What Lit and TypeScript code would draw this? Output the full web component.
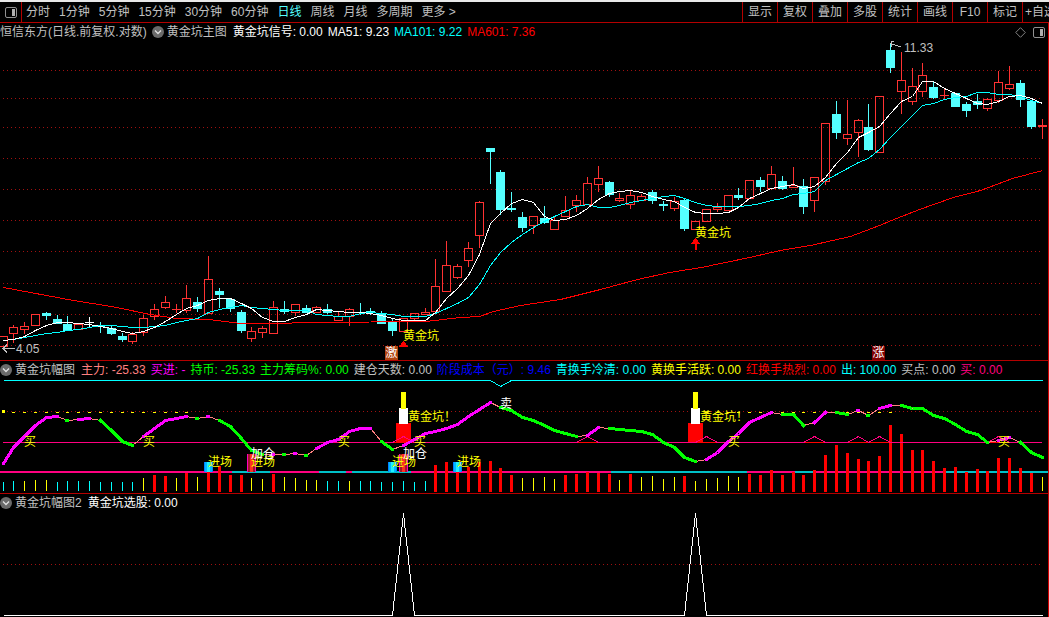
import { LitElement, html, svg, css } from "lit";
import { customElement, state } from "lit/decorators.js";

type Candle = [kind: string, high: number, top: number, bottom: number, low: number];

const RED = "#ff3232";
const CYAN = "#54ffff";
const PINK = "#ff0080";

/* kind (r: rising, c: falling, w: unchanged), high, body top, body bottom, low */
const candles: Candle[] = [
  ["r",336,336,347,347],["r",325,327,334,343],["r",322,326,330,334],["r",314,314,326,326],["c",312,313,316,320],
  ["c",315,319,324,324],["c",316,324,331,331],["r",323,324,330,330],["w",317,322,323,327],["c",322,326,327,333],
  ["c",325,328,334,335],["c",333,336,340,342],["r",332,334,342,344],["r",315,318,333,336],["r",304,309,317,320],
  ["r",296,302,308,309],["r",304,309,310,313],["r",285,298,311,313],["c",297,302,309,312],["r",256,279,314,314],
  ["c",288,291,295,308],["c",298,299,309,312],["c",310,312,331,333],["r",327,331,339,342],["r",326,328,333,338],
  ["r",301,307,334,334],["c",301,309,312,314],["r",304,304,313,316],["c",305,308,313,313],["r",306,307,313,313],
  ["c",304,309,313,314],["r",312,316,321,321],["r",308,309,317,326],["c",303,312,313,315],["c",308,311,313,315],
  ["c",311,313,324,324],["c",318,322,331,336],["r",318,318,332,332],["r",313,313,319,320],["r",308,312,315,315],
  ["r",259,286,312,312],["r",241,265,292,292],["r",264,266,278,279],["r",242,248,261,267],["r",201,202,236,248],
  ["c",148,148,152,184],["c",170,172,210,215],["c",192,208,210,212],["c",212,217,228,232],["r",216,216,226,234],
  ["c",206,218,223,224],["r",217,220,230,230],["r",196,210,217,217],["r",195,200,206,212],["r",177,183,205,205],
  ["r",166,178,185,192],["c",181,182,195,197],["r",193,198,201,202],["r",190,195,205,209],["r",194,196,201,201],
  ["c",190,192,201,204],["c",201,204,206,211],["r",197,201,209,211],["c",198,200,229,231],["r",221,221,230,230],
  ["r",209,209,222,222],["r",203,207,210,212],["r",195,195,211,211],["c",188,195,198,200],["r",180,180,199,199],
  ["c",177,180,187,192],["r",166,174,189,190],["c",176,181,189,190],["r",167,185,188,188],["c",179,186,207,214],
  ["r",177,177,201,212],["r",123,123,182,185],["c",101,114,133,139],["r",100,134,139,145],["r",119,120,133,157],
  ["c",104,127,150,151],["r",96,96,153,153],["c",43,50,68,73],["r",52,80,92,114],["r",68,86,102,105],
  ["r",63,75,92,97],["c",82,87,98,99],["r",88,95,96,100],["c",93,93,107,107],["c",102,104,111,117],
  ["c",94,101,105,109],["r",98,99,109,111],["r",71,82,101,103],["r",66,84,89,90],["c",80,83,100,107],
  ["c",101,101,127,129],["r",119,125,127,139],
];

const maShort = [
  340,339,336,330,325,322,322,323,324,326,328,331,333,331,327,321,314,308,305,300,298,298,303,308,317,321,321,317,314,309,
  310,311,312,312,313,315,318,320,320,320,312,298,288,275,254,223,213,203,199,202,216,220,219,215,208,199,193,191,190,192,
  196,199,201,207,212,213,213,212,207,198,193,188,186,184,188,186,177,163,152,137,132,126,113,101,96,81,81,88,93,98,103,
  104,101,96,95,98,103,
];

const maMid = [
  340,339,337,335,333,332,330,329,327,325,325,326,327,327,326,325,322,320,318,312,309,307,305,307,308,309,310,310,310,314,
  315,316,316,313,312,313,314,316,316,316,313,308,303,297,284,265,252,242,234,227,221,216,211,206,204,207,207,205,202,200,
  198,196,195,198,202,205,206,206,206,205,203,200,198,194,193,191,180,174,168,162,158,149,137,126,115,105,103,99,97,96,92,
  92,94,94,96,100,103,
];

const maLong: [number, number][] = [
  [0,287],[6.5,300],[10,306],[13.6,314],[16,318],[19,319],[22,323],[24.5,323],[29,322],[39,321],[42.3,317],[44,316],
  [45.3,311],[47.8,305],[51.5,299],[55.2,289],[58.6,279],[61.6,272],[64.5,267],[69,257],[71.8,250],[74.6,245],[78.3,236],
  [81,225],[82.1,220],[84.7,209],[87.8,197],[90.3,190],[93.3,178],[96,170],
];

const trend = [
  463,447,436,425,417,416,420,419,418,420,430,441,445,436,428,420,418,416,418,416,420,426,438,450,454,454,454,453,455,448,
  442,439,431,428,428,441,449,445,439,433,431,428,424,416,409,402,407,410,417,420,425,430,433,436,435,427,428,429,430,431,
  434,442,447,457,461,459,452,441,433,422,417,412,414,414,425,422,412,412,414,410,415,408,405,405,408,408,415,418,424,431,
  434,442,440,437,442,452,457,
];

/* first index, last index, m: strengthening, g: weakening */
const trendRuns: [number, number, string][] = [
  [0,5,"m"],[6,6,"g"],[7,8,"m"],[9,12,"g"],[13,17,"m"],[18,18,"g"],[19,19,"m"],[20,24,"g"],[25,25,"m"],[26,26,"g"],
  [27,27,"m"],[28,28,"g"],[29,34,"m"],[35,36,"g"],[37,45,"m"],[46,53,"g"],[54,55,"m"],[56,64,"g"],[65,71,"m"],[72,74,"g"],
  [75,76,"m"],[77,78,"g"],[79,79,"m"],[80,80,"g"],[81,82,"m"],[83,91,"g"],[92,93,"m"],[94,96,"g"],
];

const turnoverKinds =
  "ccyyyccccccccyrryryrrrryyryyyyccyccccccc" + "rrrrrrrryyyyrrrrryryyyyryyyyy" + "rrrrrrrrrrrrrrrrrrrrrrrrrrry";
const turnoverTops = [
  482,481,481,480,480,482,481,481,481,482,482,482,482,478,475,476,478,473,477,472,466,475,475,478,479,474,477,478,480,480,
  481,481,481,481,481,482,482,481,482,481,465,462,472,467,462,461,468,475,478,478,477,479,475,474,472,473,474,480,474,477,
  476,479,477,476,481,479,478,476,477,474,475,470,475,472,475,470,455,445,453,459,461,456,425,434,450,450,461,468,467,472,
  469,471,458,458,468,473,477,
];

/* positions where the base band changes colour, beginning with pink */
const bandEdges = [-0.3,21.25,24.75,29.2,31.75,32.25,37.75,56.25,68.8,73.25,75,87.2,96.6];

const periods = ["分时","1分钟","5分钟","15分钟","30分钟","60分钟","日线","周线","月线","多周期","更多 〉"];
const tools = ["显示","复权","叠加","多股","统计","画线","F10","标记","+自选"];

const mainValues: [string, string][] = [
  ["黄金坑信号: 0.00","white"],["MA51: 9.23","white"],["MA101: 9.22","cyan"],["MA601: 7.36","red"],
];
const bandValues: [string, string][] = [
  ["主力: -25.33","salmon"],["买进: -","magenta"],["持币: -25.33","green"],["主力筹码%: 0.00","green"],
  ["建仓天数: 0.00","gray"],["阶段成本（元）: 9.46","blue"],["青换手冷清: 0.00","cyan"],["黄换手活跃: 0.00","yellow"],
  ["红换手热烈: 0.00","red"],["出: 100.00","cyan"],["买点: 0.00","gray"],["买: 0.00","pink"],
];

@customElement("app-root")
export class AppRoot extends LitElement {
  static styles = css`
    :host {
      display: block;
      min-height: 100vh;
      overflow: hidden;
      background: #000;
      color: #c0c0c0;
      font: 12px/16px "Liberation Sans", "Noto Sans CJK SC", sans-serif;
    }
    button {
      font: inherit;
      color: inherit;
      background: none;
      border: 0;
      padding: 0;
      margin: 0;
      white-space: nowrap;
      cursor: pointer;
    }
    .topbar {
      display: flex;
      height: 20px;
      border-top: 2px solid #e8e8e8;
      border-bottom: 1px solid #b40000;
      overflow: hidden;
    }
    .layout {
      flex: none;
      width: 22px;
      border-right: 1px solid #b40000;
      box-sizing: border-box;
      display: grid;
      place-items: center;
    }
    .periods {
      display: flex;
      flex: 1;
      min-width: 0;
      gap: 9px;
      padding-left: 4px;
      overflow: hidden;
    }
    .active { color: #54ffff; }
    .tools { display: flex; flex: none; }
    .tool {
      width: 35px;
      border-left: 1px solid #b40000;
      overflow: hidden;
      text-align: center;
    }
    .tool:last-child {
      width: 27px;
      padding-left: 2px;
      text-align: left;
    }
    .panel {
      border-right: 1px solid #d00000;
      border-bottom: 1px solid #b40000;
    }
    .panel:last-child { border-bottom: 0; }
    .legend {
      display: flex;
      align-items: center;
      gap: 5px;
      height: 17px;
      white-space: nowrap;
      overflow: hidden;
    }
    .main .legend { height: 18px; }
    .title { display: flex; align-items: center; gap: 3px; margin-right: 1px; }
    .spacer { flex: 1; }
    .corner { display: flex; gap: 7px; padding-right: 3px; }
    .legend button, .corner button { display: flex; }
    svg { display: block; }
    .plot { shape-rendering: crispEdges; overflow: hidden; }
    .plot text { fill: #c0c0c0; }
    .plot .yellow { fill: #ff0; }
    .plot .white { fill: #fff; }
    .line { fill: none; stroke-width: 1; }
    .grid { stroke: #a01010; stroke-dasharray: 1 3; }
    .white { color: #fff; }
    .cyan { color: #00ffff; }
    .red { color: #ff0000; }
    .salmon { color: #ff8080; }
    .magenta { color: #ff00ff; }
    .green { color: #00ff00; }
    .gray { color: #c0c0c0; }
    .blue { color: #0000ff; }
    .yellow { color: #ffff00; }
    .pink { color: #ff0080; }
  `;

  @state() private span = 1049;
  @state() private period = "日线";

  private observer = new ResizeObserver(() => {
    this.span = this.clientWidth || this.span;
  });

  connectedCallback() {
    super.connectedCallback();
    this.observer.observe(this);
  }

  disconnectedCallback() {
    this.observer.disconnect();
    super.disconnectedCallback();
  }

  /** Left pixel of the one-pixel column that belongs to bar i. */
  private x(i: number) {
    return Math.floor(3 + (i * (this.span - 10)) / 96);
  }

  private points(list: [number, number][]) {
    return list.map(([i, y]) => `${this.x(i) + 0.5},${y + 0.5}`).join(" ");
  }

  private series(values: number[], from = 0, to = values.length - 1) {
    return this.points(values.slice(from, to + 1).map((y, k) => [from + k, y] as [number, number]));
  }

  private box(x: number, y: number, w: number, h: number, fill: string) {
    return svg`<rect x=${x} y=${y} width=${w} height=${h} fill=${fill}></rect>`;
  }

  private gridLine(y: number) {
    return svg`<line class="grid" x1="3" x2=${this.span - 6} y1=${y + 0.5} y2=${y + 0.5}></line>`;
  }

  private label(i: number, center: number, text: string, cls: string, shift = 0) {
    return svg`<text class=${cls} x=${this.x(i) + shift} y=${center + 4}>${text}</text>`;
  }

  private candle([kind, high, top, bottom, low]: Candle, i: number) {
    const x = this.x(i);
    if (kind === "r" && bottom - top > 2) {
      return svg`
        ${top > high ? this.box(x, high, 1, top - high, RED) : ""}
        ${low > bottom ? this.box(x, bottom, 1, low - bottom, RED) : ""}
        <rect x=${x - 3.5} y=${top + 0.5} width="8" height=${bottom - top - 1} fill="none" stroke=${RED}></rect>`;
    }
    const fill = kind === "r" ? RED : kind === "w" ? "#fff" : CYAN;
    return svg`${this.box(x, high, 1, low - high, fill)}${this.box(x - 4, top, 9, bottom - top, fill)}`;
  }

  private badge(x: number, text: string, fill: string) {
    return svg`${this.box(x, 346, 13, 14, fill)}<text class="white" x=${x + 0.5} y="357">${text}</text>`;
  }

  private mainPlot() {
    const first = this.x(37) + 0.5;
    const second = this.x(64) + 0.5;
    const peak = this.x(82);
    return html`<svg class="plot" width=${this.span - 1} height="319" viewBox="0 41 ${this.span - 1} 319">
      ${[70, 98, 127, 158, 189, 220, 251, 283, 314, 345].map((y) => this.gridLine(y))}
      ${candles.map((c, i) => this.candle(c, i))}
      <polyline class="line" stroke="#ff0000" points=${this.points(maLong)}></polyline>
      <polyline class="line" stroke="#00ffff" points=${this.series(maMid)}></polyline>
      <polyline class="line" stroke="#ffffff" points=${this.series(maShort)}></polyline>
      <path fill="#ff0000" d="M${first} 341 l5 6 h-10z M${second} 238 l5 6 h-4 v6 h-2 v-6 h-4z"></path>
      ${this.label(37, 336, "黄金坑", "yellow")} ${this.label(64, 233, "黄金坑", "yellow")}
      <path class="line" stroke="#c0c0c0" d="M3 348.5 H15 M7 344.5 L3 348.5 L7 352.5"></path>
      <text x="16" y="353">4.05</text>
      <path class="line" stroke="#c0c0c0" d="M${peak} 43.5 L${peak + 11} 47 M${peak + 4} 41.5 H${peak + 1} V47"></path>
      <text x=${peak + 14} y="52">11.33</text>
      ${this.badge(this.x(36) - 7, "激", "#b04410")} ${this.badge(this.x(81) - 7, "涨", "#800000")}
    </svg>`;
  }

  private pit(i: number) {
    const x = this.x(i);
    return svg`
      ${this.box(x - 7, 423, 15, 20, "#ff0000")}
      ${this.box(x - 4, 408, 9, 16, "#ffffff")}
      ${this.box(x - 2, 392, 5, 17, "#ffff00")}`;
  }

  private block(i: number, top: number, edge: string, mid: string, core: string) {
    const x = this.x(i) - 4;
    const h = 472 - top;
    return svg`${this.box(x, top, 9, h, edge)}${this.box(x + 1, top, 7, h, mid)}${this.box(x + 3, top, 3, h, core)}`;
  }

  private bandPlot() {
    const end = this.x(96);
    const peaks = [37, 54, 65, 75, 79, 81, 92];
    const marks = [...Array(18).keys(), ...Array.from({ length: 18 }, (_, k) => k + 65)];
    return html`<svg class="plot" width=${this.span - 1} height="115" viewBox="0 378 ${this.span - 1} 115">
      ${this.gridLine(411)}
      <polyline class="line" stroke="#00ffff"
        points=${this.points([[0, 380], [45, 380], [46, 386], [47, 380], [96, 380]])}></polyline>
      ${marks.map((i) => this.box(this.x(i) - 1, 412, 3, 1, "#ffff00"))}
      ${this.box(2, 410, 3, 3, "#ffff00")}
      ${bandEdges.slice(0, -1).map((from, k) => {
        const left = Math.max(0, this.x(from));
        return this.box(left, 471, this.x(bandEdges[k + 1]) - left, 2, k % 2 ? "#00c0c8" : PINK);
      })}
      ${[...turnoverKinds].map((kind, i) =>
        kind === "r"
          ? this.box(this.x(i) - 1, turnoverTops[i], 3, 492 - turnoverTops[i], "#ff0000")
          : this.box(this.x(i), turnoverTops[i], 1, 491 - turnoverTops[i], kind === "c" ? "#00ffff" : "#ffff00"),
      )}
      ${this.pit(37)} ${this.pit(64)}
      ${[19, 36, 42].map((i) => this.block(i, 462, "#0080ff", "#00b8ff", "#20f0ff"))}
      ${[23, 37].map((i) => this.block(i, 454, "#ff00c0", "#a01828", "#ff3020"))}
      ${this.box(3, 442, end - 3, 1, PINK)}
      ${peaks.map(
        (i) => svg`<polyline class="line" stroke=${PINK}
          points=${this.points([[i - 1, 442], [i, 436], [i + 1, 442]])}></polyline>
          ${this.box(this.x(i) - 9, 442, 19, 1, "#ff0000")}`,
      )}
      <polyline class="line" stroke="#ff8080" points=${this.series(trend)}></polyline>
      ${trendRuns.map(([from, to, kind]) => {
        const color = kind === "m" ? "#ff00ff" : "#00ff00";
        return from === to
          ? this.box(this.x(from) - 2, trend[from] - 1, 4, 3, color)
          : svg`<polyline fill="none" stroke=${color} stroke-width="3" stroke-linejoin="round" stroke-linecap="square"
              points=${this.series(trend, from, to)}></polyline>`;
      })}
      ${[2, 13, 31, 38, 67, 92].map((i) => this.label(i, 442, "买", "yellow"))}
      ${this.label(46, 404, "卖", "white")}
      ${[19, 23, 36, 42].map((i) => this.label(i, 462, "进场", "yellow"))}
      ${[23, 37].map((i) => this.label(i, 454, "加仓", "white"))}
      ${[37, 64].map((i) => this.label(i, 417, "黄金坑！", "yellow", 5))}
    </svg>`;
  }

  private signalPlot() {
    return html`<svg class="plot" width=${this.span - 1} height="106" viewBox="0 511 ${this.span - 1} 106">
      ${this.gridLine(564)}
      <polyline class="line" stroke="#ffffff"
        points=${this.points([[0, 615], [36, 615], [37, 513], [38, 615], [63, 615], [64, 513], [65, 615], [96, 615]])}></polyline>
    </svg>`;
  }

  private menuButton(name: string) {
    return html`<button aria-label=${name}>
      <svg width="12" height="12" viewBox="0 0 12 12">
        <circle cx="6" cy="6" r="6" fill="#6a6a6a"></circle>
        <path d="M3 4.5 L6 7.5 L9 4.5" fill="none" stroke="#e0e0e0" stroke-width="1.3"></path>
      </svg>
    </button>`;
  }

  private layoutIcon() {
    return html`<svg width="12" height="11" viewBox="0 0 12 11">
      <rect x="0.5" y="0.5" width="11" height="10" rx="1.5" fill="none" stroke="#909090"></rect>
      <rect x="7" y="2" width="3" height="7" fill="#b0b0b0"></rect>
    </svg>`;
  }

  private values(list: [string, string][]) {
    return list.map(([text, cls]) => html`<span class=${cls}>${text}</span>`);
  }

  render() {
    return html`
      <header class="topbar">
        <button class="layout" aria-label="布局">${this.layoutIcon()}</button>
        <nav class="periods">
          ${periods.map(
            (p) => html`<button class=${p === this.period ? "active" : ""} @click=${() => (this.period = p)}>
              ${p.startsWith("更多") ? "更多 >" : p}
            </button>`,
          )}
        </nav>
        <div class="tools">${tools.map((t) => html`<button class="tool">${t}</button>`)}</div>
      </header>
      <section class="panel main">
        <div class="legend">
          <span>恒信东方(日线.前复权.对数)</span>
          <span class="title">${this.menuButton("主图菜单")}<span>黄金坑主图</span></span>
          ${this.values(mainValues)}
          <span class="spacer"></span>
          <span class="corner">
            <button aria-label="标记点">
              <svg width="11" height="11" viewBox="0 0 11 11">
                <path d="M5.5 0.7 L10.3 5.5 L5.5 10.3 L0.7 5.5z" fill="none" stroke="#808080"></path>
              </svg>
            </button>
            <button aria-label="侧栏">${this.layoutIcon()}</button>
          </span>
        </div>
        ${this.mainPlot()}
      </section>
      <section class="panel">
        <div class="legend">
          <span class="title">${this.menuButton("幅图菜单")}<span>黄金坑幅图</span></span>
          ${this.values(bandValues)}
        </div>
        ${this.bandPlot()}
      </section>
      <section class="panel">
        <div class="legend">
          <span class="title">${this.menuButton("幅图2菜单")}<span>黄金坑幅图2</span></span>
          <span class="white">黄金坑选股: 0.00</span>
        </div>
        ${this.signalPlot()}
      </section>
    `;
  }
}
